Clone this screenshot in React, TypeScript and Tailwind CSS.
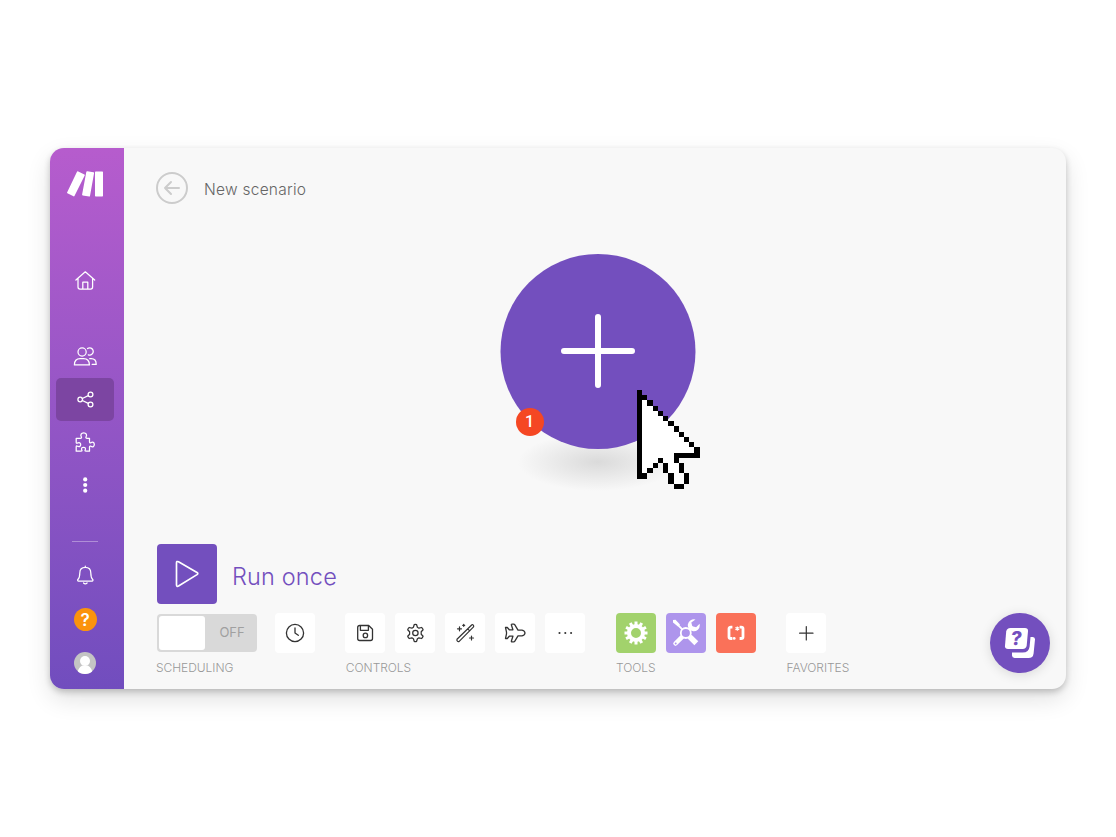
import type { ReactNode } from "react";

type P = { children: ReactNode; className?: string; box?: string; sw?: number };

function Line({ children, className = "h-6 w-6", box = "0 0 24 24", sw = 1.3 }: P) {
  return (
    <svg viewBox={box} className={className} fill="none" stroke="currentColor" strokeWidth={sw} strokeLinecap="round" strokeLinejoin="round">
      {children}
    </svg>
  );
}

const CURSOR = [
  "#...........",
  "##..........",
  "#o#.........",
  "#oo#........",
  "#ooo#.......",
  "#oooo#......",
  "#ooooo#.....",
  "#oooooo#....",
  "#ooooooo#...",
  "#oooooooo#..",
  "#ooooooooo#.",
  "#oooooooooo#",
  "#oooooo#####",
  "#ooo#oo#....",
  "#oo#.#oo#...",
  "#o#..#oo#...",
  "##....#oo#..",
  "......#oo#..",
  ".......##...",
];

function Cursor() {
  return (
    <svg viewBox="0 0 12 19" preserveAspectRatio="none" shapeRendering="crispEdges" className="absolute left-[137px] top-[136px] h-[99px] w-[62.6px]">
      {CURSOR.flatMap((row, y) =>
        row.split("").map((c, x) =>
          c === "." ? null : <rect key={`${x}-${y}`} x={x} y={y} width="1" height="1" fill={c === "#" ? "#000" : "#fff"} />
        )
      )}
    </svg>
  );
}

function Sidebar() {
  return (
    <nav className="flex w-[74px] shrink-0 flex-col items-center bg-linear-to-b from-[#b65ccd] to-[#714dbe] pr-1 text-white">
      <svg viewBox="0 0 36 26" className="mt-[23px] h-[26px] w-9" fill="#fff">
        <path d="M10.8.3 17.4 3.5Q18 3.8 17.7 4.4L7.6 24.8Q7.2 25.6 6.5 25.3L.4 22.3Q-.2 22 .2 21.3L10 .7Q10.300.1 10.800.3Z" />
        <path d="M20.300.2 26.500 1.300Q27.200 1.400 27.100 2.100L23 24.900Q22.900 25.600 22.200 25.500L15.700 24.400Q15 24.300 15.100 23.600L19.300.9Q19.500 0 20.300.2Z" />
        <rect x="28" y="0.400" width="8" height="25" rx="0.700" />
      </svg>
      <Line className="mt-[71px] h-6 w-6" sw={1.250}>
        <path transform="translate(.3 0)" d="M2.600 12 12 3.800l9.400 8.200M4.700 10.400v8.600q0 2 2 2h10.600q2 0 2-2v-8.600M9.500 20.800v-6.600h5v6.600" />
      </Line>
      <Line className="mt-[52px] h-6 w-6" sw={1.250}>
        <g transform="translate(.4 0)">
          <circle cx="8.700" cy="8" r="4.100" />
          <path d="M1 20.900q0-6.200 5.800-6.200h3.400q5.800 0 5.800 6.200ZM14.100 4.600a3.600 3.600 0 1 1 .8 6.200M16.300 14.700h1.500q5 0 5 5.700h-4" />
        </g>
      </Line>
      <div className="mt-2.5 flex h-[43px] w-[58px] items-center justify-center rounded-[5px] bg-[#7c45a2]">
        <Line className="h-6 w-6" sw={1.300}>
          <circle cx="7.200" cy="11.500" r="2.300" />
          <circle cx="17.500" cy="6.500" r="2.400" />
          <circle cx="17.500" cy="16.500" r="2.400" />
          <path d="m9.300 10.500 6-2.900M9.300 12.500l6 2.900" />
        </Line>
      </div>
      <Line className="mt-[9px] h-6 w-6" sw={1.250}>
        <path transform="translate(-.2 0)" d="M3.400 8.300h4.200q1.500 0 1-1.300C7.300 4.800 8.400 2.800 10.900 2.800s3.600 2 2.300 4.200q-.5 1.300 1 1.300h2.500v3.500q0 1.500 1.300 1c2-1.300 3.500-.3 3.500 1.700s-1.500 3-3.500 1.700q-1.300-.5-1.300 1v4h-3.600q-1.300 0-.8-1c1-2 .1-2.900-1.600-2.900s-2.600.9-1.600 2.900q.5 1-.8 1H3.400v-4.300q0-1.300 1-.8c2.300 1 3.500.2 3.500-1.500s-1.200-2.500-3.500-1.500q-1 .5-1-.8Z" />
      </Line>
      <Line className="mt-[19px] h-6 w-6" sw={0}>
        <g fill="#fff">
          <circle cx="12.200" cy="6.400" r="2.100" />
          <circle cx="12.200" cy="12" r="2.100" />
          <circle cx="12.200" cy="17.700" r="2.100" />
        </g>
      </Line>
      <div className="mt-11 h-px w-[26px] bg-white/35" />
      <Line className="mt-[21px] h-6 w-6" sw={1.250}>
        <path transform="translate(.4 0)" d="M11.900 3.200v1M6.400 10c0-3.800 2.200-5.700 5.500-5.700s5.500 1.900 5.500 5.700c0 3.600.6 5.200 1.900 6.500.6.700.2 1.500-.6 1.500H5.100c-.8 0-1.200-.8-.6-1.500 1.300-1.300 1.900-2.900 1.900-6.500M10.100 20q1.800 1.700 3.600 0" />
      </Line>
      <div className="mt-[21px] flex h-[23px] w-[23px] items-center justify-center rounded-full bg-[#fb930d] pt-px font-['Inter'] text-[17px] font-semibold leading-none">?</div>
      <svg viewBox="0 0 22 22" className="mt-[21px] h-[22px] w-[22px] rounded-full">
        <rect width="22" height="22" fill="#c4c4c4" />
        <circle cx="11" cy="9" r="5" fill="#fff" />
        <path d="M3.500 22q0-6 4.700-8.500h5.600q4.700 2.500 4.700 8.500Z" fill="#fff" />
      </svg>
    </nav>
  );
}

function Tile({ children, className = "bg-white text-[#333]" }: { children: ReactNode; className?: string }) {
  return <button className={`flex h-10 w-10 items-center justify-center rounded-[4px] ${className}`}>{children}</button>;
}

function Group({ label, children, inset = "" }: { label: string; children: ReactNode; inset?: string }) {
  return (
    <div>
      <div className="flex h-10 items-center gap-2.5">{children}</div>
      <div className={`mt-[7px] text-[12px] font-light leading-4 tracking-[-0.04px] text-[#999] ${inset}`}>{label}</div>
    </div>
  );
}

function Toolbar() {
  return (
    <div className="mt-[9px] flex">
      <div className="w-[189px]">
        <Group label="SCHEDULING">
          <div className="ml-px flex h-[38px] w-[100px] items-center rounded-[4px] bg-[#d9d9d9] p-0.5">
            <div className="h-[34px] w-[46px] rounded-[3px] bg-white" />
            <div className="flex-1 pb-px pl-[4px] text-center text-[13px] leading-none tracking-[-0.1px] text-[#a0a0a0]">OFF</div>
          </div>
          <div className="ml-2">
            <Tile>
              <Line className="h-5 w-5" box="0 0 20 20" sw={1.300}>
                <circle cx="10" cy="10" r="8.600" />
                <path d="M10 5v5l3.300 2.300" />
              </Line>
            </Tile>
          </div>
        </Group>
      </div>
      <div className="w-[271px]">
        <Group label="CONTROLS" inset="pl-[0.8px]">
          <Tile>
            <Line className="h-5 w-5" box="0 0 20 20" sw={1.300}>
              <path d="M2.700 4.500q0-2 2-2h9l3.800 3.800v9.200q0 2-2 2H4.700q-2 0-2-2ZM5.400 2.800v4.500h8V2.800" />
              <circle cx="10.400" cy="12.400" r="2.200" />
            </Line>
          </Tile>
          <Tile>
            <Line className="h-[22px] w-[22px]" box="0 0 22 22" sw={1.250}>
              <circle cx="11.400" cy="11" r="2.700" />
              <path transform="translate(.4 0)" d="M9.800 2.700q1.200-.5 2.400 0l.8 2.600 1.500.9 2.700-.7q1.200.9 1.500 2.300l-1.900 2v2.400l1.900 2q-.3 1.400-1.500 2.300l-2.700-.7-1.500.9-.8 2.600q-1.200.5-2.400 0L9 16.700l-1.500-.9-2.700.7q-1.200-.9-1.500-2.300l1.900-2V9.800l-1.900-2q.3-1.400 1.500-2.300l2.700.7L9 5.300Z" />
            </Line>
          </Tile>
          <Tile>
            <Line className="h-5 w-5" box="0 0 20 20" sw={1.200}>
              <path d="m2 16.200 14.400-14a1.300 1.300 0 0 1 1.900 1.900L4.200 18.400q-1 .6-1.800-.2t-.4-2ZM12.700 5.800l2 2M4.500 3.800v4M2.500 5.800h4M8.700 1.300v2M7.700 2.300h2M16.500 13v4M14.500 15h4" />
            </Line>
          </Tile>
          <Tile>
            <Line className="h-[22px] w-[22px]" box="0 0 22 22" sw={1.300}>
              <path d="M1.500 5.500h1.800l2 2.300h3.600L7.400 3q-.2-.9.600-.9h1.700q.7 0 1 .6l3.300 5.500h4q2.800.6 3 2.800-.2 2.200-3 2.800h-4l-3.300 5.500q-.3.600-1 .6H8q-.8 0-.6-.9l1.500-4.800H5.300l-2 2.300H1.500l1-4.700v-1.600Z" />
            </Line>
          </Tile>
          <Tile>
            <svg viewBox="0 0 16 4" className="h-1 w-4" fill="currentColor">
              <circle cx="2.500" cy="2" r="1.050" /><circle cx="8.300" cy="2" r="1.050" /><circle cx="14.100" cy="2" r="1.050" />
            </svg>
          </Tile>
        </Group>
      </div>
      <div className="w-[170px]">
        <Group label="TOOLS">
          <Tile className="bg-[#a2d26c] text-white">
            <svg viewBox="-12 -12 24 24" className="h-6 w-6" fill="none" stroke="currentColor">
              <circle r="7" strokeWidth="4" />
              {[0, 30, 60, 90, 120, 150].map((a) => (
                <path key={a} d="M0-11.500v3.500M0 8v3.500" strokeWidth="3" transform={`rotate(${a})`} />
              ))}
            </svg>
          </Tile>
          <Tile className="bg-[#ae95ec] text-white">
            <svg viewBox="0 0 30 30" className="h-[30px] w-[30px]" fill="none" stroke="currentColor">
              <path d="m4.500 4.500 7.300 7.300" strokeWidth="1.800" />
              <path d="m2 2 2.500-.3L9 6.500 7 8.500 2 4.500Z" fill="currentColor" stroke="none" />
              <path d="m18.600 18.600 6.700 6.700" strokeWidth="5.500" />
              <path d="M11.200 18.800 4.500 25.500" strokeWidth="4.500" strokeLinecap="round" />
              <path d="m17.500 12.500 4-4" strokeWidth="3.600" />
              <path d="M24.500 1.500a6 6 0 1 0 4.300 5.700l-.2-1.500-3.500 3.500-3.800-1-1-3.700Z" fill="currentColor" stroke="none" />
              <circle cx="14.800" cy="15" r="5" strokeWidth="1.800" fill="#ae95ec" />
              <circle cx="4.700" cy="25.500" r="1" fill="#ae95ec" stroke="none" />
            </svg>
          </Tile>
          <Tile className="bg-[#fa7159] text-white">
            <svg viewBox="0 0 18 16" className="h-4 w-[18px]" fill="none" stroke="currentColor" strokeWidth="3">
              <path d="M5.400 2.200H3.900Q2 2.200 2 3.700v8.300q0 1.500 1.900 1.500h1.500" strokeWidth="2.800" />
              <path d="M12.600 2.200h1.500q1.900 0 1.900 1.500v8.300q0 1.500-1.900 1.500h-1.500" strokeWidth="2.800" />
              <path d="M10.300 1.400v4.400M8.400 2.500l3.800 2.200M12.200 2.500 8.400 4.700" strokeWidth="1.200" />
              <circle cx="7.200" cy="13.400" r="1.400" fill="currentColor" stroke="none" />
            </svg>
          </Tile>
        </Group>
      </div>
      <Group label="FAVORITES" inset="pl-[0.5px]">
        <Tile>
          <Line className="h-4 w-4" box="0 0 16 16" sw={1.200}><path d="M8.300 1.500v13.400M1.600 8.200H15" /></Line>
        </Tile>
      </Group>
    </div>
  );
}

export default function App() {
  return (
    <div className="flex h-[837px] w-[1116px] bg-white px-[50px] pb-[148px] pt-[148px] font-['Inter',sans-serif]">
      <div className="flex h-[541px] w-[1016px] overflow-hidden rounded-[14px] bg-[#f8f8f8] shadow-[0_3px_6px_rgba(0,0,0,0.2),0_10px_24px_rgba(0,0,0,0.12)]">
        <Sidebar />
        <main className="relative flex flex-1 flex-col pl-8 pt-6">
          <header className="flex h-8 items-center">
            <Line className="h-8 w-8 text-[#ccc]" box="0 0 32 32" sw={2}>
              <circle cx="16" cy="16" r="15" />
              <path d="M23 16H9M15 10l-6 6 6 6" />
            </Line>
            <h1 className="ml-4 mt-[4px] text-[15.500px] font-light leading-5 tracking-[0.25px] text-[#666]">New scenario</h1>
          </header>
          <div className="relative ml-[344px] mt-[50px] h-[195px] w-[196px]">
            <div className="absolute left-[18px] top-[179px] h-[58px] w-[160px] bg-radial-[closest-side] from-[#dadada] to-[#f8f8f8]" />
            <button className="relative flex h-[195px] w-[196px] items-center justify-center text-white">
              <svg viewBox="0 0 196 195" className="h-[195px] w-[196px]">
                <circle cx="98" cy="97.500" r="97.500" fill="#734fbe" />
                <path d="M98 63v68M64 97h68" stroke="#fff" strokeWidth="6" strokeLinecap="round" />
              </svg>
            </button>
            <div className="absolute left-[16px] top-[154px] flex h-7 w-7 items-center justify-center rounded-full bg-[#f54723] pb-px pr-px font-['Roboto'] text-[16px] font-medium leading-none text-white">1</div>
            <Cursor />
          </div>
          <div className="ml-px mt-[95px] flex items-center">
            <button className="flex h-[60px] w-[60px] items-center justify-center rounded-[4px] bg-[#734fbe] text-white">
              <Line className="h-[30px] w-[30px]" box="0 0 30 30" sw={1.700}>
                <path d="M4.500 4q0-2.200 2-1.200L25 13.400q1.600 1.100 0 2.200L6.500 27q-2 1-2-1.200Z" />
              </Line>
            </button>
            <span className="ml-[15px] mt-[6px] text-[23.500px] font-light leading-8 tracking-[0.150px] text-[#734fbe]">Run once</span>
          </div>
          <Toolbar />
          <button className="absolute bottom-4 right-4 flex h-[60px] w-[60px] items-center justify-center rounded-full bg-[#734fbe] shadow-[0_2px_12px_rgba(0,0,0,0.13)]">
            <svg viewBox="0 0 32 32" className="h-8 w-8">
              <path d="M26.500 10h2.400q2.200.2 2.100 2.400l-1.400 14q-.6 4.600-5.100 4.600H10.600q-2.500 0-2.600-2.400v-3.200h10.600q6.400 0 7-6Z" fill="#fff" />
              <path d="M6.500 1H21q3.200 0 3 3l-1.300 14.500q-.5 3.400-4 3.400H4q-3.200 0-3-3.100L2.200 4.500Q2.800 1 6.500 1Z" fill="#fff" />
              <text x="12.700" y="18" textAnchor="middle" transform="translate(1 0) skewX(-5)" fill="#734fbe" fontFamily="Inter" fontWeight="800" fontSize="19">?</text>
            </svg>
          </button>
        </main>
      </div>
    </div>
  );
}
